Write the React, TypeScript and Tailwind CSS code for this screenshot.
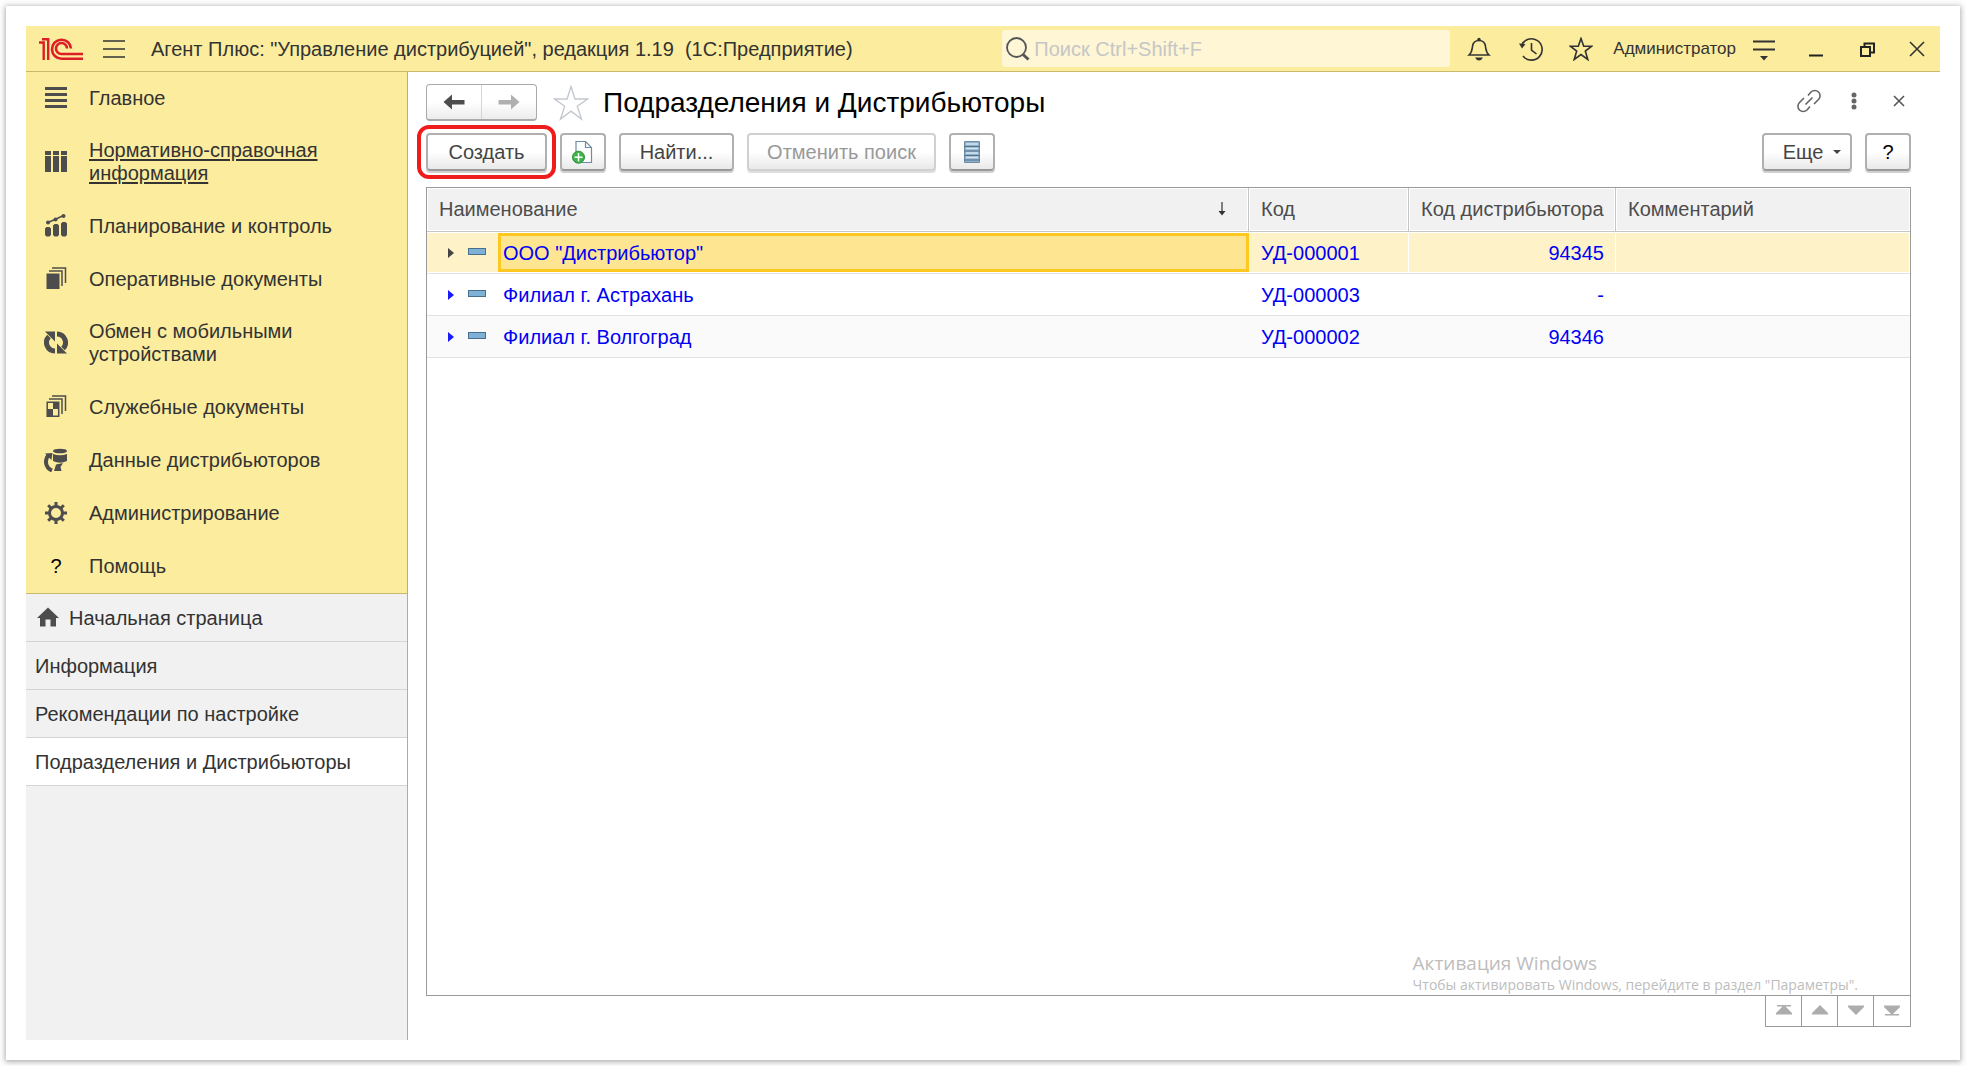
import type { ReactNode } from 'react';

type IconProps = { children: ReactNode; className?: string };

function Icon({ children, className = 'size-6' }: IconProps) {
  return (
    <svg viewBox="0 0 24 24" fill="none" className={`shrink-0 ${className}`} aria-hidden="true">
      {children}
    </svg>
  );
}

const dark = '#4d4d4d';

const sections = [
  {
    label: 'Главное',
    icon: <path d="M1 2.500h22M1 8.500h22M1 14.500h22M1 20.500h22" stroke={dark} strokeWidth="3" />,
  },
  {
    label: 'Нормативно-справочная информация',
    active: true,
    icon: (
      <>
        <path d="M1 1h6v4H1zM9 1h6v4H9zM17 1h6v4h-6z" fill={dark} />
        <path d="M1 6h6v16H1zM9 6h6v16H9zM17 6h6v16h-6z" fill={dark} />
      </>
    ),
  },
  {
    label: 'Планирование и контроль',
    icon: (
      <>
        <path d="M1 14.500L2.500 13h3L7 14.500V21l-1.500 1.500h-3L1 21zM9 11.500l1.500-1.500h3l1.500 1.500V21l-1.500 1.500h-3L9 21zM17 9.500L18.500 8h3l1.500 1.500V21l-1.500 1.500h-3L17 21z" fill={dark} />
        <path d="M4 8.500l7-3 8.500-4" stroke={dark} strokeWidth="1.500" />
        <circle cx="4" cy="8.500" r="2" fill={dark} />
        <circle cx="11.500" cy="5.500" r="2" fill={dark} />
        <circle cx="19.500" cy="2" r="2" fill={dark} />
      </>
    ),
  },
  {
    label: 'Оперативные документы',
    icon: (
      <>
        <path d="M2.500 6.500h13V22h-13z" fill={dark} />
        <path d="M5 4h13v15M8 1h13.500v15" stroke={dark} strokeWidth="1.500" />
      </>
    ),
  },
  {
    label: 'Обмен с мобильными устройствами',
    icon: (
      <>
        <path d="M11 20A8.500 8.500 0 0 1 5 5.500M13 3A8.500 8.500 0 0 1 19 17.500" stroke={dark} strokeWidth="5" />
        <path d="M1 .5h10v10zM23 22.500H13v-10z" fill={dark} />
      </>
    ),
  },
  {
    label: 'Служебные документы',
    icon: (
      <>
        <path d="M3.200 7.200h11.500v14H3.200z" stroke={dark} strokeWidth="1.500" />
        <path d="M9 7h6v7H9zM3 14h6v7H3z" fill={dark} />
        <path d="M5 4h13v15M8 1h13.500v15" stroke={dark} strokeWidth="1.500" />
      </>
    ),
  },
  {
    label: 'Данные дистрибьюторов',
    icon: (
      <>
        <ellipse cx="16" cy="3" rx="7" ry="2.300" fill={dark} />
        <path d="M9 6q7 2.500 14 0v7q-7 3.500-14 0z" fill={dark} />
        <path d="M8 22.500C1 19.500 .5 12 4.500 7" stroke={dark} strokeWidth="4" />
        <path d="M1 5.500l7.500-.5-1 7zM10 23l2-6.500 7-1.500-2.500 4 1 4z" fill={dark} />
      </>
    ),
  },
  {
    label: 'Администрирование',
    icon: (
      <>
        <circle cx="12" cy="12" r="6.500" stroke={dark} strokeWidth="3" />
        <path d="M12 1v4M12 19v4M1 12h4M19 12h4M4.200 4.200L7 7M17 17l2.800 2.800M4.200 19.800L7 17M17 7l2.800-2.800" stroke={dark} strokeWidth="3" />
      </>
    ),
  },
  { label: 'Помощь' },
];

const openTabs = [
  { label: 'Начальная страница', home: true },
  { label: 'Информация' },
  { label: 'Рекомендации по настройке' },
  { label: 'Подразделения и Дистрибьюторы', active: true },
];

const rows = [
  { name: 'ООО "Дистрибьютор"', code: 'УД-000001', distributor: '94345' },
  { name: 'Филиал г. Астрахань', code: 'УД-000003', distributor: '-' },
  { name: 'Филиал г. Волгоград', code: 'УД-000002', distributor: '94346' },
];

const pager = [
  { label: 'В начало', d: 'M5 6h14v1.500H5zM12 6l8 8v1.500H4V14z' },
  { label: 'Вверх', d: 'M12 6l8 8v1.500H4V14z' },
  { label: 'Вниз', d: 'M4 6.500h16V8l-8 8-8-8z' },
  { label: 'В конец', d: 'M4 6.500h16V8l-8 8-8-8zM5 15h14v1.500H5z' },
];

const buttonBase =
  'flex h-[38px] shrink-0 items-center justify-center rounded-[4px] border-2 bg-gradient-to-b from-white from-50% to-[#e9e9e9]';
const button = `${buttonBase} border-[#b0b0b0] border-b-[#999] text-[#444] shadow-[0_2px_0_#d0d0d0]`;

function TitleBar() {
  return (
    <header className="flex h-[46px] shrink-0 items-center border-b border-[#c9ba6b] bg-[#fbec9e]">
      <svg viewBox="0 0 44 22" className="ml-[13px] h-[22px] w-11 shrink-0" fill="none" stroke="#dc1f26" aria-label="1С">
        <path d="M0 4.500h4.700V22M3 1.200h6.200V22" strokeWidth="2.400" />
        <path d="M32 10.500A9.500 9.500 0 1 0 22.500 20.700H44" strokeWidth="2.600" />
        <path d="M28 10.500A5.500 5.500 0 1 0 22.500 16H44" strokeWidth="2.600" />
      </svg>
      <button type="button" aria-label="Меню" className="ml-[19px]">
        <Icon>
          <path d="M1 4h22M1 12h22M1 20h22" stroke="#333" strokeWidth="1.500" />
        </Icon>
      </button>
      <h1 className="ml-[25px] whitespace-pre">Агент Плюс: "Управление дистрибуцией", редакция 1.19  (1С:Предприятие)</h1>

      <label className="ml-auto flex h-[37px] w-[448px] items-center rounded-[3px] bg-[#fef6d5] pl-1">
        <Icon>
          <circle cx="10.500" cy="10.500" r="9.500" stroke="#555" strokeWidth="1.800" />
          <path d="M17 17.500l5.500 5" stroke="#555" strokeWidth="3" />
        </Icon>
        <input
          type="search"
          aria-label="Поиск"
          placeholder="Поиск Ctrl+Shift+F"
          className="ml-1 min-w-0 flex-1 bg-transparent outline-none placeholder:text-[#c6c6c6]"
        />
      </label>

      <div className="ml-[17px] flex shrink-0 items-center">
        <button type="button" aria-label="Уведомления">
          <Icon>
            <path d="M2 18c3-2.500 3-5 3.500-8.500.5-4 3-6 6.500-6s6 2 6.500 6c.5 3.500.5 6 3.500 8.500z" stroke="#333" strokeWidth="1.600" />
            <path d="M8 20.500h8q-1.500 3-4 3t-4-3z" fill="#333" />
            <circle cx="12" cy="2.500" r="1.700" fill="#333" />
          </Icon>
        </button>
        <button type="button" aria-label="История" className="ml-7">
          <Icon>
            <path d="M2.500 8.500A10.700 10.700 0 1 1 4 19" stroke="#333" strokeWidth="1.600" />
            <path d="M0 6.500l6.500.5-3.500 4.500z" fill="#333" />
            <path d="M12.500 6v7l5 4" stroke="#333" strokeWidth="1.600" />
          </Icon>
        </button>
        <button type="button" aria-label="Избранное" className="ml-[26px]">
          <Icon>
            <path d="M12 1.500l2.700 7.700h8L16.300 14l2.500 8.500-6.800-5-6.800 5L7.700 14 1.300 9.200h8z" stroke="#333" strokeWidth="1.600" />
          </Icon>
        </button>
        <button type="button" className="ml-5 text-[17px]">
          Администратор
        </button>
        <button type="button" aria-label="Сервис" className="ml-4">
          <Icon>
            <path d="M1 4.500h22M1 12.500h22" stroke="#333" strokeWidth="1.800" />
            <path d="M8 19h8l-4 4.500z" fill="#333" />
          </Icon>
        </button>
        <button type="button" aria-label="Свернуть" className="ml-7">
          <Icon>
            <path d="M5 18.500h14" stroke="#222" strokeWidth="2" />
          </Icon>
        </button>
        <button type="button" aria-label="Развернуть" className="ml-[27px]">
          <Icon>
            <path d="M6 10h9v9H6z" stroke="#222" strokeWidth="2" />
            <path d="M9.500 9V6.500H19v9h-3" stroke="#222" strokeWidth="2" />
          </Icon>
        </button>
        <button type="button" aria-label="Закрыть" className="mr-[11px] ml-[26px]">
          <Icon>
            <path d="M5 5l14 14M19 5L5 19" stroke="#333" strokeWidth="1.600" />
          </Icon>
        </button>
      </div>
    </header>
  );
}

function Sidebar() {
  return (
    <aside className="flex w-[382px] shrink-0 flex-col border-r border-[#b5b56a] bg-[#f1f1f1]">
      <nav className="border-b border-[#c9ba6b] bg-[#fbec9e]">
        {sections.map((section) => (
          <a key={section.label} href="#" className="flex min-h-[53px] items-center pt-[14px] pr-16 pb-[15px] pl-[18px] leading-[23px]">
            {section.icon ? (
              <Icon>{section.icon}</Icon>
            ) : (
              <span className="w-6 text-center text-black">?</span>
            )}
            <span className={`ml-[21px] ${section.active ? 'underline underline-offset-2' : ''}`}>{section.label}</span>
          </a>
        ))}
      </nav>
      {openTabs.map((tab) => (
        <a
          key={tab.label}
          href="#"
          className={`flex h-12 items-center border-b border-[#d5d5d5] pl-[9px] ${tab.active ? 'bg-white' : ''}`}
        >
          {tab.home && (
            <Icon className="mr-[9px] ml-px size-6">
              <path d="M12 1.500L23 12h-3v8.500h-5.500v-7h-5v7H4V12H1z" fill="#4d4d4d" />
            </Icon>
          )}
          {tab.label}
        </a>
      ))}
    </aside>
  );
}

function FormHeader() {
  return (
    <div className="flex h-[37px] items-center">
      <div className="flex h-[37px] w-[111px] shrink-0 rounded-[4px] border border-b-2 border-[#aaa] bg-gradient-to-b from-white from-50% to-[#ececec]">
        <button type="button" aria-label="Назад" className="flex flex-1 items-center justify-center border-r border-[#d5d5d5]">
          <Icon>
            <path d="M1.500 12L10 4.500V10h12.500v4.500H10v5z" fill="#4d4d4d" />
          </Icon>
        </button>
        <button type="button" aria-label="Вперед" className="flex flex-1 items-center justify-center">
          <Icon>
            <path d="M22.500 12L14 4.500V10H1.500v4.500H14v5z" fill="#b0b0b0" />
          </Icon>
        </button>
      </div>
      <button type="button" aria-label="В избранное" className="ml-4">
        <Icon className="size-9">
          <path d="M12 1l2.600 8.300H23l-6.800 4.900 2.800 8.500-7-5.300-7 5.300 2.800-8.500L1 9.300h8.400z" stroke="#c3c8ce" strokeWidth="0.900" />
        </Icon>
      </button>
      <h2 className="ml-[14px] text-[28px] text-black">Подразделения и Дистрибьюторы</h2>
      <div className="ml-auto flex items-center pb-1">
        <button type="button" aria-label="Ссылка">
          <Icon>
            <path d="M11 6.500l3-3.500a5.200 5.200 0 0 1 7.500 7.500l-4.500 4.500M13 17.500L10 21a5.200 5.200 0 0 1-7.500-7.500L7 9M8.500 15.500l7-7" stroke="#666" strokeWidth="1.600" />
          </Icon>
        </button>
        <button type="button" aria-label="Еще действия" className="ml-[21px]">
          <Icon>
            <g fill="#666">
              <circle cx="12" cy="6" r="2.500" />
              <circle cx="12" cy="12" r="2.500" />
              <circle cx="12" cy="18" r="2.500" />
            </g>
          </Icon>
        </button>
        <button type="button" aria-label="Закрыть форму" className="ml-[21px]">
          <Icon>
            <path d="M7 7l10 10M17 7L7 17" stroke="#555" strokeWidth="1.600" />
          </Icon>
        </button>
      </div>
    </div>
  );
}

function Toolbar() {
  return (
    <div className="mt-3 flex gap-[13px]">
      <div className="relative">
        <button type="button" className={`${button} w-[121px]`}>
          Создать
        </button>
        <span className="pointer-events-none absolute -inset-x-[9px] -inset-y-2 rounded-[12px] border-4 border-[#ee1c1c]" />
      </div>
      <button type="button" aria-label="Скопировать" className={`${button} w-[46px]`}>
        <Icon className="size-6">
          <path d="M5 1.500h9.500l6 6v15H5z" fill="#fff" stroke="#6f8ba0" strokeWidth="1.200" />
          <path d="M14.500 1.500v6h6" stroke="#6f8ba0" strokeWidth="1.200" />
          <circle cx="7.500" cy="17.200" r="6" fill="#3db54a" stroke="#2b8f3a" />
          <path d="M7.500 13v8.500M3.500 17.200h8" stroke="#fff" strokeWidth="1.500" />
        </Icon>
      </button>
      <button type="button" className={`${button} w-[115px]`}>
        Найти...
      </button>
      <button type="button" disabled className={`${buttonBase} w-[189px] border-[#d0d0d0] text-[#999] shadow-[0_2px_0_#dedede]`}>
        Отменить поиск
      </button>
      <button type="button" aria-label="Список" className={`${button} w-[46px]`}>
        <Icon>
          <path d="M4.500 1.500h15v21h-15z" fill="#8fb0c8" stroke="#6d8ea6" />
          <path d="M6 4h12M6 8.500h12M6 13h12M6 17.500h12" stroke="#d6e6f2" strokeWidth="1.500" />
          <path d="M4 6.500h16M4 11h16M4 15.500h16M4 20h16" stroke="#54748c" strokeWidth="1.200" />
        </Icon>
      </button>
      <button type="button" className={`${button} ml-auto w-[90px] gap-2.5 pl-2.5`}>
        Еще
        <svg viewBox="0 0 8 4" className="h-1 w-2" fill="#444" aria-hidden="true">
          <path d="M0 0h8L4 4z" />
        </svg>
      </button>
      <button type="button" aria-label="Справка" className={`${button} w-[46px]`}>
        <span className="text-black">?</span>
      </button>
    </div>
  );
}

function DepartmentsTable() {
  const head = 'border-r border-b border-[#c6c6c6] bg-[#f1f1f1] px-3 pt-0 pb-0.5 text-left font-normal shadow-[inset_0_0_0_1px_#fff]';
  return (
    <div className="relative flex-1 border border-[#9a9a9a]">
      <table className="w-full table-fixed border-separate border-spacing-0">
        <thead>
          <tr className="h-11 text-[#4d4d4d]">
            <th scope="col" className={head}>
              <div className="flex items-center justify-between pr-2">
                Наименование
                <svg viewBox="0 0 12 16" className="h-4 w-3" fill="none" aria-label="По возрастанию">
                  <path d="M6 1v12" stroke="#333" strokeWidth="1.200" />
                  <path d="M2.500 10h7L6 14.500z" fill="#333" />
                </svg>
              </div>
            </th>
            <th scope="col" className={`${head} w-40`}>Код</th>
            <th scope="col" className={`${head} w-[207px]`}>
              <div className="text-right whitespace-nowrap">Код дистрибьютора</div>
            </th>
            <th scope="col" className={`${head} w-[294px] border-r-0`}>Комментарий</th>
          </tr>
        </thead>
        <tbody className="text-[#0000f5]">
          {rows.map((row, i) => {
            const cell =
              i === 0
                ? 'border-b border-[#e3e3e3] bg-[#fef2c8] px-3 py-0 shadow-[inset_-1px_0_0_#fff,inset_0_-1px_0_#fff,inset_0_1px_0_#fff]'
                : `border-b border-[#e3e3e3] px-3 py-0 ${i % 2 === 0 ? 'bg-[#fafafa]' : ''}`;
            return (
              <tr key={row.code} className="h-[42px]">
                <td className={`${cell} pr-0! pl-5!`}>
                  <div className="flex items-center">
                    <svg viewBox="0 0 7 10" className="h-2.5 w-[7px]" fill={i === 0 ? '#444' : '#1a1aff'} aria-hidden="true">
                      <path d="M1 0l6 5-6 5z" />
                    </svg>
                    <span className="mb-0.5 ml-[14px] h-[7px] w-[18px] border border-[#46708c] bg-[#7fb0d6]" />
                    <span
                      className={`ml-3 flex h-[39px] flex-1 items-center border-3 pl-0.5 ${
                        i === 0 ? 'border-[#fdc921] bg-[#fee591]' : 'border-transparent'
                      }`}
                    >
                      {row.name}
                    </span>
                  </div>
                </td>
                <td className={cell}>{row.code}</td>
                <td className={`${cell} text-right`}>{row.distributor}</td>
                <td className={cell} />
              </tr>
            );
          })}
        </tbody>
      </table>
      <div className="pointer-events-none absolute right-[52px] bottom-0 font-['Open_Sans','Noto_Sans',sans-serif] text-[#bdbdbd]">
        <p className="text-[19px] leading-6">Активация Windows</p>
        <p className="text-[14px] leading-5 whitespace-nowrap">Чтобы активировать Windows, перейдите в раздел "Параметры".</p>
      </div>
    </div>
  );
}

export default function App() {
  return (
    <div className="flex min-h-screen bg-[#fdfdfd] p-1.5 font-['Liberation_Sans',Arial,sans-serif] text-[20px] text-[#333]">
      <div className="flex flex-1 flex-col bg-white p-5 shadow-[0_1px_5px_1px_rgba(0,0,0,0.3)]">
        <TitleBar />
        <div className="flex flex-1">
          <Sidebar />
          <main className="flex min-w-0 flex-1 flex-col pt-3 pr-[29px] pb-[13px] pl-[18px]">
            <FormHeader />
            <Toolbar />
            <div className="mt-4 flex flex-1 flex-col">
              <DepartmentsTable />
              <div className="flex justify-end">
                <div className="flex h-[31px] divide-x divide-[#9a9a9a] border border-t-0 border-[#9a9a9a]">
                  {pager.map((item) => (
                    <button key={item.label} type="button" aria-label={item.label} className="flex w-9 items-center justify-center">
                      <svg viewBox="0 0 24 24" className="size-6" fill="#adadad" aria-hidden="true">
                        <path d={item.d} />
                      </svg>
                    </button>
                  ))}
                </div>
              </div>
            </div>
          </main>
        </div>
      </div>
    </div>
  );
}
